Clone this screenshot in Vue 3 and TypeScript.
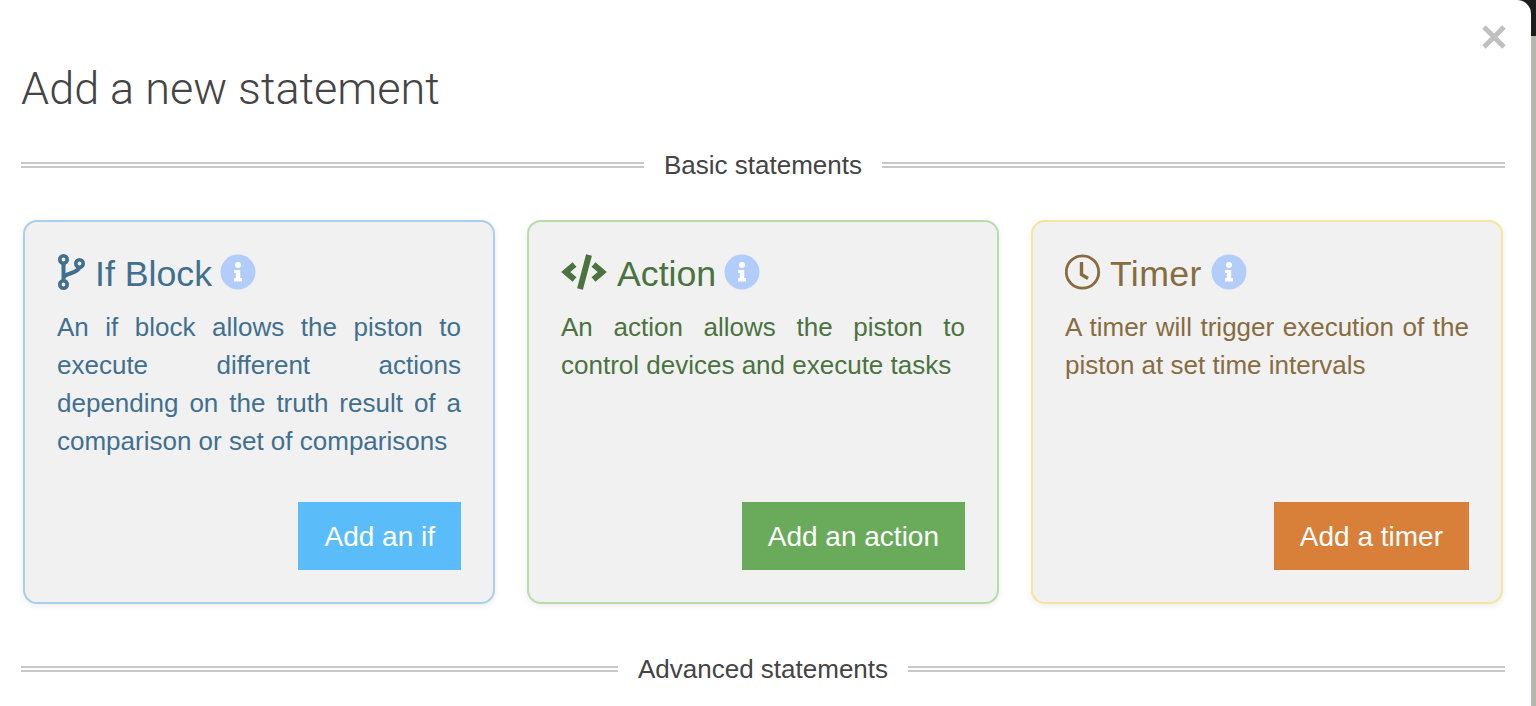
<script setup lang="ts">
interface Card {
  kind: string
  title: string
  text: string
  button: string
}

const cards: Card[] = [
  {
    kind: 'if',
    title: 'If Block',
    text: 'An if block allows the piston to execute different actions depending on the truth result of a comparison or set of comparisons',
    button: 'Add an if',
  },
  {
    kind: 'action',
    title: 'Action',
    text: 'An action allows the piston to control devices and execute tasks',
    button: 'Add an action',
  },
  {
    kind: 'timer',
    title: 'Timer',
    text: 'A timer will trigger execution of the piston at set time intervals',
    button: 'Add a timer',
  },
]
</script>

<template>
  <div class="page">
    <div class="modal">
      <div class="close-row">
        <svg class="close" width="26" height="26" viewBox="0 0 26 26">
          <path d="M3 3 L23 23 M23 3 L3 23" stroke="#c0c0c0" stroke-width="5" fill="none" />
        </svg>
      </div>
      <h1 class="heading">Add a new statement</h1>
      <div class="divider"><span>Basic statements</span></div>
      <div class="cards">
        <div v-for="card in cards" :key="card.kind" class="card" :class="card.kind">
          <h2 class="title">
            <svg v-if="card.kind === 'if'" class="icon" width="28" height="36" viewBox="0 0 28 36" fill="none" stroke="currentColor" stroke-width="3.6">
              <circle cx="6.5" cy="5.5" r="3.7" />
              <circle cx="6.5" cy="30.5" r="3.7" />
              <circle cx="22.5" cy="9.5" r="3.7" />
              <path d="M6.5 9 V27 M6.5 24 C7 19 21 20 22.5 13" stroke-width="4" />
            </svg>
            <svg v-else-if="card.kind === 'action'" class="icon" width="46" height="36" viewBox="0 0 46 36" fill="none" stroke="currentColor" stroke-width="6">
              <path d="M13.5 10.5 L4.8 18 L13.5 25.5 M32.5 10.5 L41.2 18 L32.5 25.5" />
              <path d="M28 1 L19 35" stroke-width="6" />
            </svg>
            <svg v-else class="icon" width="36" height="36" viewBox="0 0 36 36" fill="none" stroke="currentColor">
              <circle cx="17.5" cy="18" r="16.2" stroke-width="2.8" />
              <path d="M16.5 8 V20.5 L23 24.5" stroke-width="3.4" />
            </svg>
            <span class="title-text">{{ card.title }}</span>
            <svg class="info" width="36" height="36" viewBox="0 0 36 36">
              <circle cx="18" cy="18" r="17.5" fill="#b3cdfb" />
              <circle cx="18" cy="11" r="3" fill="#fff" />
              <path d="M14 16 H20.2 V24 H22 V27.5 H14 V24 H15.8 V19 H14 Z" fill="#fff" />
            </svg>
          </h2>
          <p class="text">{{ card.text }}</p>
          <div class="actions">
            <button class="btn">{{ card.button }}</button>
          </div>
        </div>
      </div>
      <div class="divider advanced"><span>Advanced statements</span></div>
    </div>
    <div class="strip"></div>
  </div>
</template>

<style>
html, body { margin: 0; background: #b9b6b0; overflow: hidden; }
</style>

<style scoped>
.page {
  display: flex;
  height: 706px;
  overflow: hidden;
  font-family: "Liberation Sans", Arial, sans-serif;
  background: linear-gradient(#1c1c1c 36px, #b9b6b0 36px);
}
.modal {
  flex: 1;
  min-width: 0;
  height: 706px;
  box-sizing: border-box;
  padding: 24px 26px 0 21px;
  background: #fff;
  border-radius: 0 14px 0 0;
}
.strip { width: 5px; flex-shrink: 0; }
.close-row {
  display: flex;
  justify-content: flex-end;
  height: 28px;
  margin-right: -2px;
}
.heading {
  margin: 0;
  height: 72px;
  font-family: Roboto, sans-serif;
  font-weight: 300;
  font-size: 45px;
  line-height: 74px;
  color: #444;
}
.divider {
  display: flex;
  align-items: center;
  gap: 20px;
  margin-top: 26px;
  font-size: 26px;
  line-height: 30px;
  color: #444;
}
.divider::before,
.divider::after {
  content: "";
  flex: 1;
  height: 0;
  border-top: 6px double #c8c8c8;
}
.divider.advanced { margin-top: 50px; }
.cards {
  display: grid;
  grid-template-columns: repeat(3, 472px);
  gap: 32px;
  margin: 40px 0 0 2px;
}
.card {
  height: 384px;
  box-sizing: border-box;
  padding: 32px 32px 32px;
  display: flex;
  flex-direction: column;
  background: #f1f1f1;
  border: 2px solid;
  border-radius: 14px;
  box-shadow: 0 2px 6px rgba(0, 0, 0, 0.08);
}
.card.if { border-color: #a9d0ea; color: #41708f; }
.card.action { border-color: #bcdbaa; color: #4a7340; }
.card.timer { border-color: #f4e59f; color: #876c3f; }
.title {
  margin: 0;
  height: 36px;
  display: flex;
  align-items: center;
  font-weight: 400;
  font-size: 35.7px;
  line-height: 36px;
}
.title-text { padding-top: 4px; }
.timer .title-text { letter-spacing: 0.4px; }
.icon { margin-right: 10px; }
.timer .icon { margin-right: 9px; }
.info { margin-left: 8px; }
.timer .info { margin-left: 9px; }
.text {
  margin: 18px 0 0;
  font-size: 26px;
  line-height: 38px;
  text-align: justify;
}
.actions {
  margin-top: auto;
  display: flex;
  justify-content: flex-end;
}
.btn {
  height: 68px;
  padding: 2px 26px 0;
  border: 0;
  font-family: inherit;
  font-size: 28px;
  color: #fff;
}
.if .btn { background: #5bbcfa; }
.action .btn { background: #69ab5a; }
.timer .btn { background: #d8803a; }
</style>
